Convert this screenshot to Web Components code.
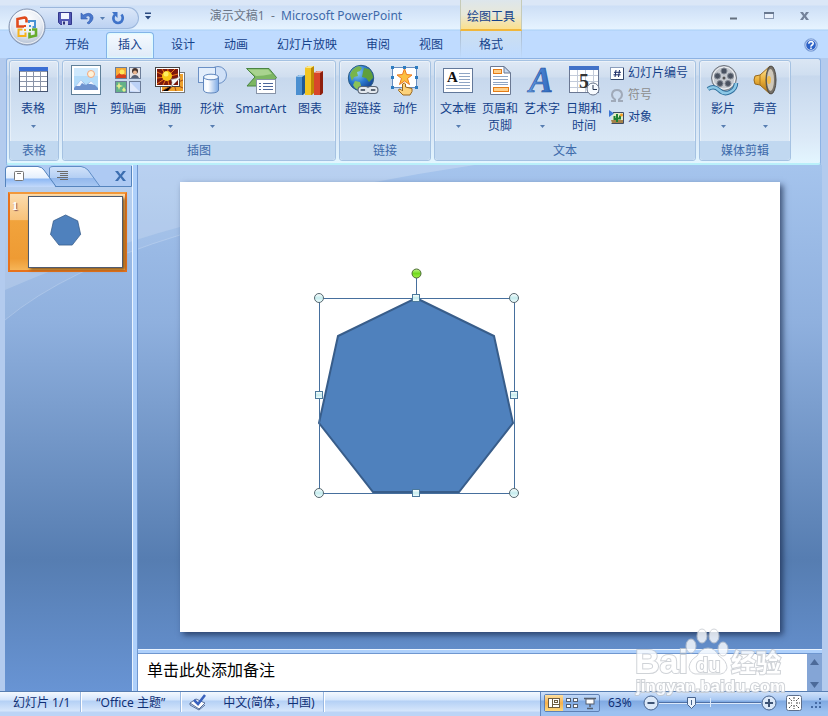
<!DOCTYPE html>
<html lang="zh-CN">
<head>
<meta charset="utf-8">
<title>演示文稿1 - Microsoft PowerPoint</title>
<style>
    html, body {
        height: 100%;
        margin: 0;
    }
    body {
        font: 12px/17px "Noto Sans", "Noto Sans CJK SC", sans-serif;
        color: #15428b;
        background: #b3cbee;
        overflow: hidden;
    }
</style>
</head>
<body>

<ppt-window>
    <app-header slot="header" doc="演示文稿1" app="Microsoft PowerPoint" tool="绘图工具">
        <ribbon-tab>开始</ribbon-tab>
        <ribbon-tab active>插入</ribbon-tab>
        <ribbon-tab>设计</ribbon-tab>
        <ribbon-tab>动画</ribbon-tab>
        <ribbon-tab>幻灯片放映</ribbon-tab>
        <ribbon-tab>审阅</ribbon-tab>
        <ribbon-tab>视图</ribbon-tab>
        <ribbon-tab slot="context">格式</ribbon-tab>
    </app-header>

    <ribbon-bar slot="header">
        <ribbon-group label="表格">
            <ribbon-button icon="table" menu>表格</ribbon-button>
        </ribbon-group>
        <ribbon-group label="插图">
            <ribbon-button icon="picture">图片</ribbon-button>
            <ribbon-button icon="clipart">剪贴画</ribbon-button>
            <ribbon-button icon="album" menu>相册</ribbon-button>
            <ribbon-button icon="shapes" menu>形状</ribbon-button>
            <ribbon-button icon="smartart" wide>SmartArt</ribbon-button>
            <ribbon-button icon="chart">图表</ribbon-button>
        </ribbon-group>
        <ribbon-group label="链接">
            <ribbon-button icon="globe">超链接</ribbon-button>
            <ribbon-button icon="action">动作</ribbon-button>
        </ribbon-group>
        <ribbon-group label="文本">
            <ribbon-button icon="textbox" menu>文本框</ribbon-button>
            <ribbon-button icon="headerfooter">页眉和<br>页脚</ribbon-button>
            <ribbon-button icon="wordart" menu>艺术字</ribbon-button>
            <ribbon-button icon="date">日期和<br>时间</ribbon-button>
            <ribbon-list>
                <small-button icon="number">幻灯片编号</small-button>
                <small-button icon="omega" disabled>符号</small-button>
                <small-button icon="object">对象</small-button>
            </ribbon-list>
        </ribbon-group>
        <ribbon-group label="媒体剪辑">
            <ribbon-button icon="film" menu>影片</ribbon-button>
            <ribbon-button icon="sound" menu>声音</ribbon-button>
        </ribbon-group>
    </ribbon-bar>

    <outline-panel slot="side">
        <slide-thumb number="1"></slide-thumb>
    </outline-panel>
    <slide-stage slot="main"></slide-stage>
    <notes-pane slot="notes">单击此处添加备注</notes-pane>

    <status-bar slot="footer" zoom="63%">
        <span>幻灯片 1/1</span>
        <span>“Office 主题”</span>
        <span><ppt-icon name="spell"></ppt-icon></span>
        <span>中文(简体，中国)</span>
    </status-bar>
</ppt-window>
<site-mark></site-mark>

<script>
(function () {

    const HEPTAGON = '97,0 175,38 194,125 140,194 54,194 0,125 19,38';

    // every icon is [width, height, svg content]
    const ICONS = {
        office: [38, 38, `
            <defs><radialGradient id="o" cx=".5" cy=".3" r=".75"><stop offset="0" stop-color="#fff"/><stop offset=".55" stop-color="#e6ebf3"/><stop offset="1" stop-color="#a7b6cc"/></radialGradient></defs>
            <circle cx="19" cy="19" r="18" fill="url(#o)" stroke="#8293b0"/><circle cx="19" cy="19" r="16.500" fill="none" stroke="#fff" opacity=".7"/>
            <path d="M16 18.500H9.500V11L16.500 9.500Q18.500 9.500 18.500 12V14.500" fill="none" stroke="#e04a1c" stroke-width="2.600"/>
            <path d="M21 15V13H27V19H24.500" fill="none" stroke="#4a93d4" stroke-width="2"/>
            <path d="M14.500 21.500H10.500V28H17.500V24.500" fill="none" stroke="#f6b21a" stroke-width="2"/>
            <path d="M24 21.500H28V27.500L21.500 29V24.500" fill="none" stroke="#66ac2c" stroke-width="2.600"/>
            <g><rect x="16" y="17" width="2" height="2" fill="#e8471c"/><rect x="21" y="17" width="2" height="2" fill="#4a93d4"/><rect x="16" y="21" width="2" height="2" fill="#f6b21a"/><rect x="21" y="21" width="2" height="2" fill="#66ac2c"/></g>`],
        save: [16, 16, `
            <path d="M1.500 2.500H14.500V14.500H3.500L1.500 12.500Z" fill="#5258b4" stroke="#33388c"/><rect x="4" y="3" width="8" height="6" fill="#f2f6ff"/><rect x="5" y="11" width="6" height="4" fill="#cfd7f0"/><rect x="6" y="11.500" width="2" height="3" fill="#30347a"/>`],
        undo: [16, 16, `<path d="M2 3V9H8.500L6.500 7Q10 4.500 11 7.500Q11.500 10.500 8 13L10 14Q15.500 9.500 13.500 5.500Q10.500 1.500 4.500 5Z" fill="#4a78cc" stroke="#2f5bb0" stroke-width=".6"/>`],
        redo: [16, 16, `<path d="M5 4.500Q2 8 4.500 11.500Q8 14.500 11.500 11.500Q14 8 11.500 4.500" fill="none" stroke="#3f73c9" stroke-width="2.600"/><path d="M2 2H7.500V8L5 5.500Z" fill="#3f73c9"/>`],
        down: [7, 7, `<path d="M1 2H6L3.500 5Z" fill="#567db1"/>`],
        more: [8, 8, `<path d="M1 .5H7V2H1ZM1 4H7L4 7.500Z" fill="#2a4a80"/>`],
        min: [10, 10, `<path d="M1 7.500H8" stroke="#65707f" stroke-width="2"/>`],
        max: [10, 10, `<rect x=".5" y="1.500" width="9" height="6" fill="#e9f1fc" stroke="#8a9ab4"/><path d="M0 2H10" stroke="#68788f" stroke-width="2"/>`],
        close: [11, 10, `<path d="M1 1H4L5.500 3.500 7 1H10L7 5 10 9H7L5.500 6.500 4 9H1L4 5Z" fill="#74829a"/>`],
        panelclose: [13, 12, `<path d="M1 1H4L6.500 4.500 9 1H12L8 6 12 11H9L6.500 7.500 4 11H1L5 6Z" fill="#3c6eb0"/>`],
        help: [14, 14, `<circle cx="7" cy="7" r="6.300" fill="#2c62c8" stroke="#8eaede"/><circle cx="7" cy="7" r="5.300" fill="none" stroke="#fff" stroke-width=".7"/><path d="M4.800 5.700Q5 3.600 7.200 3.600 9.400 3.800 9.200 5.500 9 6.500 7 8V8.700M7 9.600V11" fill="none" stroke="#fff" stroke-width="1.500"/>`],
        table: [32, 32, `
            <rect x="2.500" y="3.500" width="28" height="24" fill="#fff" stroke="#44536f"/><rect x="2" y="3" width="29" height="4" fill="#3b6fd4"/>
            <path d="M3 7.500H30M3 12.500H30M3 17.500H30M3 22.500H30M9.500 8V27M16.500 8V27M23.500 8V27" stroke="#8a94a8"/>`],
        picture: [32, 32, `
            <rect x="1.500" y="1.500" width="29" height="29" fill="#fff" stroke="#5f7f98"/><rect x="4" y="4" width="24" height="22" fill="#b4dcfa"/><rect x="4" y="4" width="24" height="8" fill="#cfe9fd"/>
            <circle cx="21" cy="10" r="3.500" fill="#fff3d8" stroke="#f3a77c"/><path d="M4 24L11 16 16 21 21 17 28 24V26H4Z" fill="#6f93cf"/><path d="M6 22L11 16 15 21 12 19 10 22ZM18 20L21 17 25 21 21 20Z" fill="#eef5ff"/>`],
        clipart: [32, 32, `
            <g stroke="#6c7d99"><rect x="3.500" y="3.500" width="11" height="11" fill="#f8ab36"/><rect x="17.500" y="3.500" width="11" height="11" fill="#e8e4e4"/><rect x="3.500" y="17.500" width="11" height="11" fill="#63b189"/><rect x="17.500" y="17.500" width="11" height="11" fill="#bcd2f7"/></g>
            <path d="M4 12L8 9 14 11V14H4Z" fill="#d8431c"/><circle cx="10" cy="8" r="2.500" fill="#ffe95a"/><circle cx="23" cy="7" r="3" fill="#46332c"/><circle cx="23" cy="8.500" r="2" fill="#e9b58e"/><path d="M19 14Q20 11 23 11 26 11 27 14Z" fill="#555f73"/>
            <path d="M7 18L8 21 11 22 8 23 7 26 6 23 4 22 6 21ZM12 23L13 25 14 26 12 28 10 26Z" fill="#e5ee8f"/><path d="M18 18L28 28 18 27Z" fill="#dfe9fc"/>`],
        album: [32, 32, `
            <rect x="6.500" y="8.500" width="24" height="20" fill="#fff" stroke="#777"/><rect x="8" y="10" width="21" height="17" fill="#eda12c"/><path d="M8 27L20 20 14 27M20 20 22 27M20 20 29 24M29 16L20 20" stroke="#a64b13"/>
            <rect x="1.500" y="3.500" width="24" height="19" fill="#fff" stroke="#444"/><rect x="3" y="5" width="21" height="16" fill="#7d190c"/>
            <path d="M13 13L3 8M13 13L8 5M13 13L14 5M13 13L21 5M13 13L24 10M13 13L3 14M13 13L3 20M13 13L9 21M13 13L15 21" stroke="#ef7617"/><circle cx="13" cy="12" r="5" fill="#f7c916"/><circle cx="12" cy="10" r="2.500" fill="#ffef62"/>
            <path d="M26 12V14L17 23Q19 18 17 15Q22 16 26 12Z" fill="#f6f6f6" stroke="#888" stroke-width=".6"/>`],
        shapes: [32, 32, `
            <defs><linearGradient id="c"><stop offset="0" stop-color="#eef6ff"/><stop offset=".3" stop-color="#fff"/><stop offset="1" stop-color="#7aa8e4"/></linearGradient></defs>
            <circle cx="22" cy="11" r="8.500" fill="#cfe0f7" stroke="#6b90c5"/><rect x="2.500" y="3.500" width="17" height="15" fill="#e3eefb" stroke="#6b90c5"/>
            <path d="M7.500 13V26Q8 29 15 29T22.500 26V13Z" fill="url(#c)" stroke="#5f86bd"/><ellipse cx="15" cy="13" rx="7.500" ry="2.800" fill="#f2f8ff" stroke="#5f86bd"/>`],
        smartart: [32, 32, `
            <path d="M1.500 4.500H24L31.500 13.500 25 22H2L10 13Z" fill="#7cb662" stroke="#4b8543"/><path d="M3 5.500H23L27 10Q18 12 11 12Z" fill="#a9d38f"/>
            <rect x="11.500" y="15.500" width="19" height="14" fill="#fff" stroke="#8793a7"/><path d="M14 19.500H16M18 19.500H28M14 22.500H16M18 22.500H28M14 25.500H16M18 25.500H28" stroke="#4c669a"/>`],
        chart: [32, 32, `
            <path d="M2 13L5 11H11V29L9 31H2Z" fill="#1f5996"/><path d="M2 13H8V31H2Z" fill="#4b8fd0"/><path d="M2 13L5 11H11L8 13Z" fill="#9cc8ee"/>
            <path d="M11 4L14 2H20V29L18 31H11Z" fill="#bd8a05"/><path d="M11 4H17V31H11Z" fill="#f2c522"/><path d="M11 4L14 2H20L17 4Z" fill="#fbe88a"/>
            <path d="M20 9L23 7H29V29L27 31H20Z" fill="#8f1f0d"/><path d="M20 9H26V31H20Z" fill="#d8462b"/><path d="M20 9L23 7H29L26 9Z" fill="#f29a85"/>`],
        globe: [32, 32, `
            <defs><radialGradient id="g" cx=".35" cy=".3" r=".8"><stop offset="0" stop-color="#8fd0f4"/><stop offset=".5" stop-color="#2a78cf"/><stop offset="1" stop-color="#123a86"/></radialGradient></defs>
            <circle cx="14" cy="14" r="12.700" fill="url(#g)" stroke="#2a5c86"/><path d="M3 11Q5 4 12 2L15 4 13 7 10 8 11 12 7 13 5 17Z" fill="#78b54c"/><path d="M17 4L22 5Q26 9 26 14L22 18 19 14 15 13 16 8Z" fill="#5f9f3b"/><path d="M8 17L13 18 14 22 11 26Q7 24 6 21Z" fill="#8bc257"/>
            <g fill="none" stroke="#5b6676" stroke-width="4"><rect x="12.500" y="24" width="8" height="4" rx="2"/><rect x="21.500" y="24" width="8" height="4" rx="2"/></g><g fill="none" stroke="#e4e9ef" stroke-width="1.800"><rect x="12.500" y="24" width="8" height="4" rx="2"/><rect x="21.500" y="24" width="8" height="4" rx="2"/><path d="M18 26H24"/></g>`],
        action: [32, 32, `
            <rect x="3.500" y="3.500" width="24" height="20" fill="#fff" stroke="#6b8fc0"/><path d="M15.500 4.500L17.500 10.500 23 11 18.500 14.500 20.500 20.500 15.500 17 10.500 20.500 12.500 14.500 8 11 13.500 10.500Z" fill="#fcbf42" stroke="#ee7a1e"/>
            <g fill="#2e7cc0"><rect x="2" y="2" width="3" height="3"/><rect x="14" y="2" width="3" height="3"/><rect x="26" y="2" width="3" height="3"/><rect x="2" y="12" width="3" height="3"/><rect x="26" y="12" width="3" height="3"/><rect x="2" y="22" width="3" height="3"/><rect x="26" y="22" width="3" height="3"/></g>
            <path d="M13.500 20Q15.500 18 16.500 20V23L23 24.500V27.500L21 31H14L9.500 26.500Q9.500 24 12 25.500L13.500 27Z" fill="#fbd27c" stroke="#9c671b"/>`],
        textbox: [32, 32, `
            <rect x="1.500" y="4.500" width="29" height="24" fill="#fff" stroke="#62789a"/><path d="M17 9.500H28M17 12.500H28M17 15.500H28M17 18.500H28M4 21.500H28M4 24.500H28" stroke="#8fa5c4"/>
            <text x="5" y="18" font-family="Liberation Serif, serif" font-weight="bold" font-size="15" fill="#111">A</text>`],
        headerfooter: [32, 32, `
            <path d="M6.500 2.500H20L26.500 9V30.500H6.500Z" fill="#fff" stroke="#6a7892"/><path d="M20 2.500V9H26.500Z" fill="#c8daf2" stroke="#6a7892"/>
            <rect x="9.500" y="5.500" width="8" height="4" fill="#ffd08a" stroke="#e47c17"/><rect x="9.500" y="23.500" width="15" height="4" fill="#ffd08a" stroke="#e47c17"/><path d="M9 12.500H24M9 15.500H24M9 18.500H24M9 20.500H24" stroke="#8fa5c4"/>`],
        wordart: [32, 32, `
            <defs><linearGradient id="w"><stop offset="0" stop-color="#6aa2e8"/><stop offset="1" stop-color="#2a63b8"/></linearGradient></defs>
            <text x="3" y="28" font-family="Liberation Serif, serif" font-style="italic" font-weight="bold" font-size="36" fill="url(#w)" stroke="#1f4f9d" stroke-width=".6">A</text>`],
        date: [32, 32, `
            <rect x="1.500" y="2.500" width="29" height="26" fill="#fff" stroke="#6b7893"/><rect x="1" y="2" width="30" height="4" fill="#4272c8"/><path d="M2 11.500H30M2 17.500H30M2 23.500H30M9.500 6V28M17.500 6V28M25.500 6V28" stroke="#c3cbd9"/>
            <text x="11" y="24" font-family="Liberation Serif, serif" font-weight="bold" font-size="20" fill="#333">5</text>
            <circle cx="25" cy="25" r="6" fill="#f8fbff" stroke="#68748a"/><path d="M25 21V25.500H29" fill="none" stroke="#26344f"/>`],
        number: [16, 16, `
            <rect x="1.500" y="2.500" width="13" height="12" fill="#fff" stroke="#8a9dbb"/><path d="M14.500 3V14.500H2" stroke="#33466b" fill="none"/><path d="M7 5L6 12M10.500 5L9.500 12M5 7.300H12M4.500 9.800H11.500" stroke="#1b2b66"/>`],
        omega: [16, 16, `<path d="M2 14H6V12.500Q3 10.500 3 7.500Q3.500 3 8 3T13 7.500Q13 10.500 10 12.500V14H14" fill="none" stroke="#a0aab9" stroke-width="2"/>`],
        object: [16, 16, `
            <path d="M4 3.500H14.500V14.500H2.500" fill="#e4ebc4" stroke="#3e4c66"/><path d="M2 11H14V14H3Z" fill="#a4824a"/><path d="M8 5V13M5.500 7V10H8M11 6.500V9.500H8" stroke="#1e8032" stroke-width="2" fill="none"/><circle cx="12.500" cy="6" r="1.500" fill="#f29a20"/><path d="M0 1L5 4.500 0 8Z" fill="#3c76d4"/>`],
        film: [32, 32, `
            <circle cx="17" cy="14" r="12.500" fill="#c5c9cf" stroke="#6d737c"/><circle cx="17" cy="14" r="11" fill="none" stroke="#eff1f4"/>
            <g fill="#4a5260" stroke="#858c97"><circle cx="17" cy="7" r="3"/><circle cx="23.500" cy="12" r="3"/><circle cx="21" cy="19.500" r="3"/><circle cx="13" cy="19.500" r="3"/><circle cx="10.500" cy="12" r="3"/></g><circle cx="17" cy="14" r="1.500" fill="#555"/>
            <path d="M1 25Q7 21 12 26T23 28Q29 25 29 19" fill="none" stroke="#2f6f9d" stroke-width="4.500"/><path d="M1 25Q7 21 12 26T23 28Q29 25 29 19" fill="none" stroke="#8cc8e6" stroke-width="2.500"/>`],
        sound: [32, 32, `
            <defs><linearGradient id="s" x2="0" y2="1"><stop offset="0" stop-color="#ffe9a0"/><stop offset=".5" stop-color="#eab03a"/><stop offset="1" stop-color="#a86c10"/></linearGradient></defs>
            <path d="M6 12L11 11 21 2Q25 16 21 30L11 21 6 20Q4 16 6 12Z" fill="url(#s)" stroke="#99681a"/><path d="M11 11V21" stroke="#a77520"/><ellipse cx="22" cy="16" rx="5" ry="14" fill="#77726a" stroke="#4d4a45"/><ellipse cx="21.500" cy="16" rx="3.500" ry="11" fill="#cfc8ba"/><ellipse cx="20" cy="16" rx="2" ry="4" fill="#f0bd50"/>`],
        pages: [12, 12, `<rect x="1.500" y="1.500" width="9" height="9" rx="1" fill="#fff" stroke="#777"/><path d="M4 3.500H8" stroke="#777"/>`],
        outline: [12, 12, `<path d="M0 1.500H11M3 3.500H11M3 5.500H11M0 7.500H11M3 9.500H11" stroke="#6c6c6c"/>`],
        spell: [18, 16, `<path d="M1 9L7 5 16 9 10 15Z" fill="#fff" stroke="#5a719b"/><path d="M1 9V11L10 16 16 11" fill="none" stroke="#5a719b"/><path d="M5 6L9 10 16 1" stroke="#3a62bd" stroke-width="2.500" fill="none"/>`],
        normal: [16, 16, `<rect x="2.500" y="3.500" width="11" height="9" fill="#fff" stroke="#6d5c40"/><path d="M6.500 4V12M7 9.500H13" stroke="#6d5c40"/><rect x="8.500" y="5.500" width="3" height="2" fill="none" stroke="#6d5c40"/>`],
        sorter: [16, 16, `<g fill="#fff" stroke="#555f70"><rect x="2.500" y="3.500" width="4" height="3"/><rect x="9.500" y="3.500" width="4" height="3"/><rect x="2.500" y="9.500" width="4" height="3"/><rect x="9.500" y="9.500" width="4" height="3"/></g>`],
        show: [16, 16, `<path d="M2 3.500H14M8 9V12M5 13.500H11" stroke="#555f70" stroke-width="1.500"/><rect x="4" y="4" width="8" height="5" fill="#fff" stroke="#555f70"/>`],
        minus: [18, 18, `<circle cx="9" cy="9" r="7" fill="#dbe8f8" stroke="#47638e"/><path d="M5.500 9H12.500" stroke="#3c5274" stroke-width="2"/>`],
        plus: [18, 18, `<circle cx="9" cy="9" r="7" fill="#dbe8f8" stroke="#47638e"/><path d="M5 9H13M9 5V13" stroke="#3c5274" stroke-width="2"/>`],
        fit: [16, 16, `<rect x=".5" y=".5" width="15" height="15" rx="2" fill="#fff" stroke="#5d6f8c"/><path d="M8 2V6M8 10V14M2 8H6M10 8H14M3 3L6 6M13 3L10 6M3 13L6 10M13 13L10 10" stroke="#444" stroke-dasharray="2 1"/>`],
        grip: [12, 12, `<path d="M9 1H11V3H9ZM5 5H7V7H5ZM9 5H11V7H9ZM1 9H3V11H1ZM5 9H7V11H5ZM9 9H11V11H9Z" fill="#456ba5"/>`],
        up: [15, 10, `<path d="M3 8H12L7.500 2Z" fill="#4c6a99"/>`],
        dn: [15, 10, `<path d="M3 2H12L7.500 8Z" fill="#4c6a99"/>`]
    };

    const BUTTON_RESET = `
        button {
            font: inherit;
            color: inherit;
            background: none;
            border: 0;
            padding: 0;
            margin: 0;
        }
    `;

    class BaseElement extends HTMLElement {
        constructor() {
            super();
            this.attachShadow({ mode: 'open' });
        }

        connectedCallback() {
            const template = document.createElement('template');
            template.innerHTML = `<style>${BUTTON_RESET}${this.styles()}</style>${this.markup()}`;
            this.shadowRoot.replaceChildren(template.content.cloneNode(true));
        }

        styles() {
            return '';
        }

        markup() {
            return '<slot></slot>';
        }
    }

    class PptIcon extends BaseElement {
        styles() {
            return `:host { display: block; flex: none; } svg { display: block; overflow: visible; }`;
        }
        markup() {
            const [w, h, content] = ICONS[this.getAttribute('name')];
            return `<svg width="${w}" height="${h}" viewBox="0 0 ${w} ${h}" aria-hidden="true">${content}</svg>`;
        }
    }

    class PptWindow extends BaseElement {
        styles() {
            return `
                :host { display: flex; flex-direction: column; height: 100vh; }
                .work {
                    position: relative;
                    flex: 1;
                    min-height: 0;
                    display: flex;
                    margin: 0 6px 0 5px;
                    background: linear-gradient(#a5c4ed, #8fb0de 30%, #567db1 75%, #6894d4);
                }
                .swoosh { position: absolute; left: 0; top: 0; }
                .column { flex: 1; min-width: 0; display: flex; flex-direction: column; }
                .bar { flex: none; background: #aed0fb; }
                .v { width: 4px; border-left: 1px solid #eaf4ff; border-right: 1px solid #6f97d0; z-index: 1; }
                .h { height: 3px; border-top: 1px solid #eaf4ff; border-bottom: 1px solid #6f97d0; z-index: 1; }
            `;
        }
        markup() {
            return `
                <slot name="header"></slot>
                <div class="work">
                    <svg class="swoosh" width="480" height="160" aria-hidden="true">
                        <path d="M0 125Q100 82 175 62 320 22 470 0H0Z" fill="#fff" opacity=".16"/>
                        <path d="M0 155Q60 105 175 70 320 22 470 0H0Z" fill="#fff" opacity=".08"/>
                        <path d="M0 155Q60 105 175 70" fill="none" stroke="#fff" opacity=".2"/>
                    </svg>
                    <slot name="side"></slot>
                    <div class="bar v"></div>
                    <div class="column">
                        <slot name="main"></slot>
                        <div class="bar h"></div>
                        <slot name="notes"></slot>
                    </div>
                </div>
                <slot name="footer"></slot>
            `;
        }
    }

    class AppHeader extends BaseElement {
        styles() {
            return `
                :host {
                    display: grid;
                    grid-template-columns: 460px 62px 1fr;
                    grid-template-rows: 31px 27px;
                    position: relative;
                    background: linear-gradient(#dbe7f7 0 5px, #cddff6 6px, #e6f3ff 29px, #a9d0f5 30px, #bfdbff 31px);
                }
                .title { display: flex; align-items: center; }
                .quick {
                    display: flex;
                    align-items: center;
                    gap: 4px;
                    box-sizing: border-box;
                    width: 99px;
                    height: 22px;
                    margin: 5px 5px 0 40px;
                    padding-left: 17px;
                    border: 1px solid #9cb7dc;
                    border-radius: 0 11px 11px 0;
                    border-left: 0;
                    background: linear-gradient(#dbe7f8, #bcd2f2);
                }
                .quick button:nth-child(2) { margin-left: 2px; }
                h1 { flex: 1; margin: 0; text-align: center; font: inherit; color: #3e6aaa; white-space: pre; }
                h1 span { color: #6b7688; }
                .tool {
                    display: flex;
                    align-items: center;
                    justify-content: center;
                    border: 1px solid #c6cbb8;
                    border-width: 0 1px;
                    border-bottom: 2px solid #f0b63a;
                    box-sizing: border-box;
                    padding-top: 3px;
                    background: linear-gradient(#dde6ec, #e8e8d8 50%, #fce08c);
                }
                .controls { display: flex; justify-content: flex-end; align-items: center; gap: 25px; padding-right: 18px; }
                nav { display: flex; gap: 5px; padding: 1px 0 0 53px; }
                .context {
                    display: flex;
                    justify-content: center;
                    padding-top: 1px;
                    border: 1px solid;
                    border-width: 0 1px;
                    border-image: linear-gradient(#a9b9c8, #bfdbff) 1;
                    background: linear-gradient(#cddff0, #bfdbff);
                }
                .help { display: flex; justify-content: flex-end; align-items: center; padding-right: 10px; }
                .office { position: absolute; left: 8px; top: 8px; }
            `;
        }
        markup() {
            return `
                <div class="title">
                    <div class="quick">
                        <button aria-label="保存"><ppt-icon name="save"></ppt-icon></button>
                        <button aria-label="撤消"><ppt-icon name="undo"></ppt-icon></button>
                        <button aria-label="撤消列表"><ppt-icon name="down"></ppt-icon></button>
                        <button aria-label="重复"><ppt-icon name="redo"></ppt-icon></button>
                    </div>
                    <button aria-label="自定义快速访问工具栏"><ppt-icon name="more"></ppt-icon></button>
                    <h1><span>${this.getAttribute('doc')}  -</span>  ${this.getAttribute('app')}</h1>
                </div>
                <div class="tool">${this.getAttribute('tool')}</div>
                <div class="controls">
                    <button aria-label="最小化"><ppt-icon name="min"></ppt-icon></button>
                    <button aria-label="最大化"><ppt-icon name="max"></ppt-icon></button>
                    <button aria-label="关闭"><ppt-icon name="close"></ppt-icon></button>
                </div>
                <nav><slot></slot></nav>
                <div class="context"><slot name="context"></slot></div>
                <div class="help"><button aria-label="帮助"><ppt-icon name="help"></ppt-icon></button></div>
                <button class="office" aria-label="Office 按钮"><ppt-icon name="office"></ppt-icon></button>
            `;
        }
    }

    class RibbonTab extends BaseElement {
        styles() {
            return `
                :host { display: block; }
                button { height: 26px; padding: 0 11px 2px; border: 1px solid transparent; border-bottom: 0; border-radius: 4px 4px 0 0; }
                :host([active]) button {
                    border-color: #83b4e8;
                    background: linear-gradient(#f5faff, #dfeaf8);
                    box-shadow: inset 0 0 2px 1px #d8fbff;
                }
            `;
        }
        markup() {
            return '<button role="tab"><slot></slot></button>';
        }
    }

    class RibbonBar extends BaseElement {
        styles() {
            return `
                :host {
                    display: flex;
                    gap: 3px;
                    margin: 0 7px 0 6px;
                    padding: 1px 2px 2px;
                    border: 1px solid #8db2e3;
                    border-bottom: 2px solid #b9f0fa;
                    border-radius: 3px;
                    box-shadow: 0 1px 0 #86aee0;
                    background: linear-gradient(#dbe6f4, #cfdef0 16px, #c7d8ed 17px, #dbe9f7 75%, #e3f6ff);
                }
            `;
        }
    }

    class RibbonGroup extends BaseElement {
        styles() {
            return `
                :host {
                    display: flex;
                    flex-direction: column;
                    box-sizing: border-box;
                    height: 101px;
                    border: 1px solid #a5c2e2;
                    border-radius: 3px;
                    box-shadow: inset 0 0 0 1px rgba(255, 255, 255, .4);
                    background: linear-gradient(#dfe9f5, #d0deef 16px, #c7d8ed 17px, #dae8f6 80px);
                }
                .content { flex: 1; display: flex; padding: 3px 4px 0 2px; }
                .label { line-height: 20px; height: 19px; text-align: center; color: #3e6aaa; background: #c1d8f0; border-radius: 0 0 3px 3px; }
            `;
        }
        markup() {
            return `<div class="content"><slot></slot></div><div class="label">${this.getAttribute('label')}</div>`;
        }
    }

    class RibbonButton extends BaseElement {
        styles() {
            return `
                :host { display: block; }
                button {
                    display: flex;
                    flex-direction: column;
                    align-items: center;
                    width: 42px;
                    white-space: nowrap;
                }
                :host([wide]) button { width: 56px; }
                .text { padding-top: 4px; }
                .arrow { padding-top: 6px; }
            `;
        }
        markup() {
            const arrow = this.hasAttribute('menu') ? '<ppt-icon class="arrow" name="down"></ppt-icon>' : '';
            return `
                <button>
                    <ppt-icon name="${this.getAttribute('icon')}"></ppt-icon>
                    <span class="text"><slot></slot></span>
                    ${arrow}
                </button>
            `;
        }
    }

    class RibbonList extends BaseElement {
        styles() {
            return `:host { display: flex; flex-direction: column; gap: 5px; padding: 0 3px 0 4px; }`;
        }
    }

    class SmallButton extends BaseElement {
        styles() {
            return `
                :host { display: block; }
                button { display: flex; align-items: center; gap: 3px; white-space: nowrap; }
                button:disabled { color: #8d8d8d; }
            `;
        }
        markup() {
            const disabled = this.hasAttribute('disabled') ? 'disabled' : '';
            return `<button ${disabled}><ppt-icon name="${this.getAttribute('icon')}"></ppt-icon><slot></slot></button>`;
        }
    }

    class OutlinePanel extends BaseElement {
        styles() {
            return `
                :host { display: block; width: 127px; flex: none; position: relative; }
                .tabs {
                    display: grid;
                    grid-template: 22px / 44px 1fr 18px;
                    align-items: center;
                    position: relative;
                    background: #aecaf3;
                }
                .shape { position: absolute; left: 0; top: 0; }
                .tabs button { position: relative; justify-self: start; }
                .tabs button:nth-of-type(-n+2) { padding-left: 8px; }
                .list { padding: 5px 5px 0 3px; }
            `;
        }
        markup() {
            return `
                <div class="tabs">
                    <svg class="shape" width="127" height="22" aria-hidden="true">
                        <defs>
                            <linearGradient id="a" x2="0" y2="1"><stop offset="0" stop-color="#fff"/><stop offset=".55" stop-color="#e4effd"/><stop offset=".6" stop-color="#8db8f4"/><stop offset="1" stop-color="#c4dafa"/></linearGradient>
                            <linearGradient id="b" x2="0" y2="1"><stop offset="0" stop-color="#d3e3fa"/><stop offset=".55" stop-color="#b4cff4"/><stop offset=".6" stop-color="#93b8ec"/><stop offset="1" stop-color="#a8c8f2"/></linearGradient>
                        </defs>
                        <path d="M44.500 21V3Q45 1.500 48 1.500H76Q80 2 83 5L95 21.500H50Z" fill="url(#b)" stroke="#5f8dc6"/>
                        <path d="M1 22V4Q1 2 3 2H33Q37 2.500 39 5L50 21.500V22Z" fill="url(#a)"/>
                        <path d="M.5 22V4Q.5 1.500 3 1.500H33Q37 2 39 5L51 21.500H126.500V1" fill="none" stroke="#5584bd"/>
                    </svg>
                    <button aria-label="幻灯片"><ppt-icon name="pages"></ppt-icon></button>
                    <button aria-label="大纲"><ppt-icon name="outline"></ppt-icon></button>
                    <button aria-label="关闭"><ppt-icon name="panelclose"></ppt-icon></button>
                </div>
                <div class="list"><slot></slot></div>
            `;
        }
    }

    class SlideThumb extends BaseElement {
        styles() {
            return `
                :host {
                    display: grid;
                    grid-template-columns: 17px 1fr;
                    padding: 2px 2px 2px 1px;
                    border: 2px solid #e8721b;
                    border-top-color: #f2983a;
                    background: linear-gradient(#fbdcae, #f7c27b 34%, #f1a33c 35%, #ee9b34 85%, #f6b558);
                }
                b { font: bold 12px/17px "Liberation Serif", serif; color: #fff; padding: 2px 0 0 1px; text-shadow: 1px 1px 1px #855; }
                svg { display: block; width: 100%; box-sizing: border-box; background: #fff; border: 1px solid #4f5b70; box-shadow: 2px 2px 3px #8f5c1c; }
            `;
        }
        markup() {
            return `
                <b>${this.getAttribute('number')}</b>
                <svg viewBox="0 0 600 450">
                    <polygon points="${HEPTAGON}" transform="translate(139 116)" fill="#4f81bd" stroke="#385d8a" stroke-width="5"/>
                </svg>
            `;
        }
    }

    class SlideStage extends BaseElement {
        styles() {
            return `
                :host { flex: 1; min-height: 0; display: flex; justify-content: center; align-items: center; padding: 0 42px; position: relative; }
                svg { display: block; width: 100%; max-height: calc(100% - 32px); aspect-ratio: 4 / 3; background: #fff; box-shadow: 3px 3px 6px rgba(20, 35, 70, .7); }
            `;
        }
        handles() {
            const xs = [139, 236, 334];
            const ys = [116, 213, 311];
            let out = '';
            for (let i = 0; i < 3; i++) {
                for (let j = 0; j < 3; j++) {
                    if (i == 1 && j == 1) {
                        continue;
                    }
                    if (i != 1 && j != 1) {
                        out += `<circle cx="${xs[i]}" cy="${ys[j]}" r="4.500" fill="url(#h)" stroke="#56676f"/>`;
                    } else {
                        out += `<rect x="${xs[i] - 3.5}" y="${ys[j] - 3.5}" width="7" height="7" fill="url(#h)" stroke="#4d7a9c"/>`;
                    }
                }
            }
            return out;
        }
        markup() {
            return `
                <svg viewBox="0 0 600 450">
                    <defs>
                        <linearGradient id="h" x2="0" y2="1"><stop offset="0" stop-color="#fff"/><stop offset=".5" stop-color="#c5ecee"/><stop offset="1" stop-color="#f4ffff"/></linearGradient>
                        <linearGradient id="r" x2="0" y2="1"><stop offset="0" stop-color="#c4f593"/><stop offset=".5" stop-color="#70d91c"/><stop offset="1" stop-color="#a5f04f"/></linearGradient>
                    </defs>
                    <polygon points="${HEPTAGON}" transform="translate(139 116)" fill="#4f81bd" stroke="#385d8a" stroke-width="2"/>
                    <rect x="139.500" y="116.500" width="195" height="195" fill="none" stroke="#466f9d"/>
                    <path d="M236.500 96V114" stroke="#466f9d"/>
                    <circle cx="236.500" cy="91.500" r="4.500" fill="url(#r)" stroke="#4c6a35"/>
                    ${this.handles()}
                </svg>
            `;
        }
    }

    class NotesPane extends BaseElement {
        styles() {
            return `
                :host { display: flex; height: 37px; flex: none; position: relative; }
                textarea {
                    flex: 1;
                    min-width: 0;
                    margin: 0;
                    padding: 4px 9px;
                    border: 0;
                    resize: none;
                    overflow: hidden;
                    background: #fff;
                    color: #000;
                    font: 16px/24px "Noto Sans", "Noto Sans CJK SC", sans-serif;
                }
                .scroll { width: 15px; display: flex; flex-direction: column; justify-content: space-between; padding: 3px 0 1px; background: #84a5d6; }
            `;
        }
        markup() {
            return `
                <textarea aria-label="备注">${this.textContent}</textarea>
                <div class="scroll">
                    <button aria-label="向上"><ppt-icon name="up"></ppt-icon></button>
                    <button aria-label="向下"><ppt-icon name="dn"></ppt-icon></button>
                </div>
            `;
        }
    }

    class StatusBar extends BaseElement {
        styles() {
            return `
                :host {
                    display: flex;
                    height: 24px;
                    flex: none;
                    color: #0f2f75;
                    border-top: 1px solid #567db1;
                    background: linear-gradient(#f4f9ff, #d3e5fc 8px, #b4d0f5 9px, #d6e6fb 19px, #bcd4f6 20px);
                }
                .left { flex: 1; display: flex; padding-left: 4px; }
                ::slotted(span) {
                    display: flex;
                    align-items: center;
                    padding: 0 8px;
                    margin-bottom: 4px;
                    border-right: 1px solid #9ab9e3;
                    box-shadow: 1px 0 0 #fff;
                }
                ::slotted(span:nth-child(1)) { padding: 0 10px 0 9px; }
                ::slotted(span:nth-child(2)) { padding: 0 15px; }
                ::slotted(span:nth-child(3)) { border: 0; box-shadow: none; }
            `  + `
                .right {
                    display: flex;
                    align-items: center;
                    padding: 0 6px 3px 3px;
                    border-left: 1px solid #6488c0;
                    background: linear-gradient(#cfe1fa, #a8c8f2 8px, #7fa9e2 9px, #9dc1f0 20px);
                }
                .views { display: flex; border: 1px solid #5f80b4; border-radius: 2px; margin-right: 8px; }
                .views button { padding: 0 1px; }
                .views .on { background: linear-gradient(#fde0a0, #f7b04c 50%, #fdd97e); }
                .zoom { width: 34px; text-align: left; }
                input {
                    appearance: none;
                    width: 102px;
                    height: 18px;
                    margin: 0 -1px;
                    background:
                        linear-gradient(#dbe9fb, #dbe9fb) 50% 50% / 1px 9px no-repeat,
                        linear-gradient(#4f70a5 50%, #dbe9fb 50%) 0 50% / 100% 2px no-repeat;
                }
                input::-webkit-slider-thumb {
                    appearance: none;
                    width: 11px;
                    height: 14px;
                    background: url("data:image/svg+xml,%3Csvg xmlns='http://www.w3.org/2000/svg' width='11' height='14'%3E%3Cpath d='M1.500 1.500H9.500V8.500L5.500 12.500 1.500 8.500Z' fill='%23e8f1fc' stroke='%2347638e'/%3E%3Cpath d='M5.500 4V9' stroke='%2347638e'/%3E%3C/svg%3E");
                }
                .fit { margin: 0 8px; }
            `;
        }
        markup() {
            return `
                <div class="left"><slot></slot></div>
                <div class="right">
                    <div class="views">
                        <button class="on" aria-label="普通视图"><ppt-icon name="normal"></ppt-icon></button>
                        <button aria-label="幻灯片浏览"><ppt-icon name="sorter"></ppt-icon></button>
                        <button aria-label="幻灯片放映"><ppt-icon name="show"></ppt-icon></button>
                    </div>
                    <button class="zoom">${this.getAttribute('zoom')}</button>
                    <button aria-label="缩小"><ppt-icon name="minus"></ppt-icon></button>
                    <input type="range" min="0" max="100" value="30" aria-label="显示比例">
                    <button aria-label="放大"><ppt-icon name="plus"></ppt-icon></button>
                    <button class="fit" aria-label="适应窗口"><ppt-icon name="fit"></ppt-icon></button>
                    <ppt-icon name="grip"></ppt-icon>
                </div>
            `;
        }
    }

    // translucent logo laid over the lower right corner
    class SiteMark extends BaseElement {
        styles() {
            return `
                :host { position: fixed; right: 43px; bottom: 18px; width: 150px; z-index: 5; pointer-events: none; opacity: .8; }
                svg { display: block; overflow: visible; }
                text { fill: #fff; stroke: #c4c8ce; stroke-width: 2px; paint-order: stroke; font-family: "Liberation Sans", "Noto Sans CJK SC", sans-serif; font-weight: bold; }
            `;
        }
        markup() {
            return `
                <svg width="150" height="72" aria-hidden="true">
                    <g fill="#fff" stroke="#c4c8ce">
                        <ellipse cx="56" cy="20" rx="5" ry="7"/><ellipse cx="67" cy="10" rx="5" ry="7"/><ellipse cx="79" cy="10" rx="5" ry="7"/><ellipse cx="88" cy="23" rx="5" ry="7"/>
                        <path d="M73 22Q80 22 84 30 92 35 92 42 90 49 82 48H64Q55 49 54 41 55 34 62 30 66 22 73 22Z"/>
                    </g>
                    <text x="0" y="47" font-size="34">Bai</text>
                    <text x="61" y="46" font-size="20">du</text>
                    <text x="96" y="46" font-size="25">经验</text>
                    <text x="1" y="66" font-size="17">jingyan.baidu.com</text>
                </svg>
            `;
        }
    }

    customElements.define('ppt-icon', PptIcon);
    customElements.define('ppt-window', PptWindow);
    customElements.define('app-header', AppHeader);
    customElements.define('ribbon-tab', RibbonTab);
    customElements.define('ribbon-bar', RibbonBar);
    customElements.define('ribbon-group', RibbonGroup);
    customElements.define('ribbon-button', RibbonButton);
    customElements.define('ribbon-list', RibbonList);
    customElements.define('small-button', SmallButton);
    customElements.define('outline-panel', OutlinePanel);
    customElements.define('slide-thumb', SlideThumb);
    customElements.define('slide-stage', SlideStage);
    customElements.define('notes-pane', NotesPane);
    customElements.define('status-bar', StatusBar);
    customElements.define('site-mark', SiteMark);
})();
</script>
</body>
</html>
